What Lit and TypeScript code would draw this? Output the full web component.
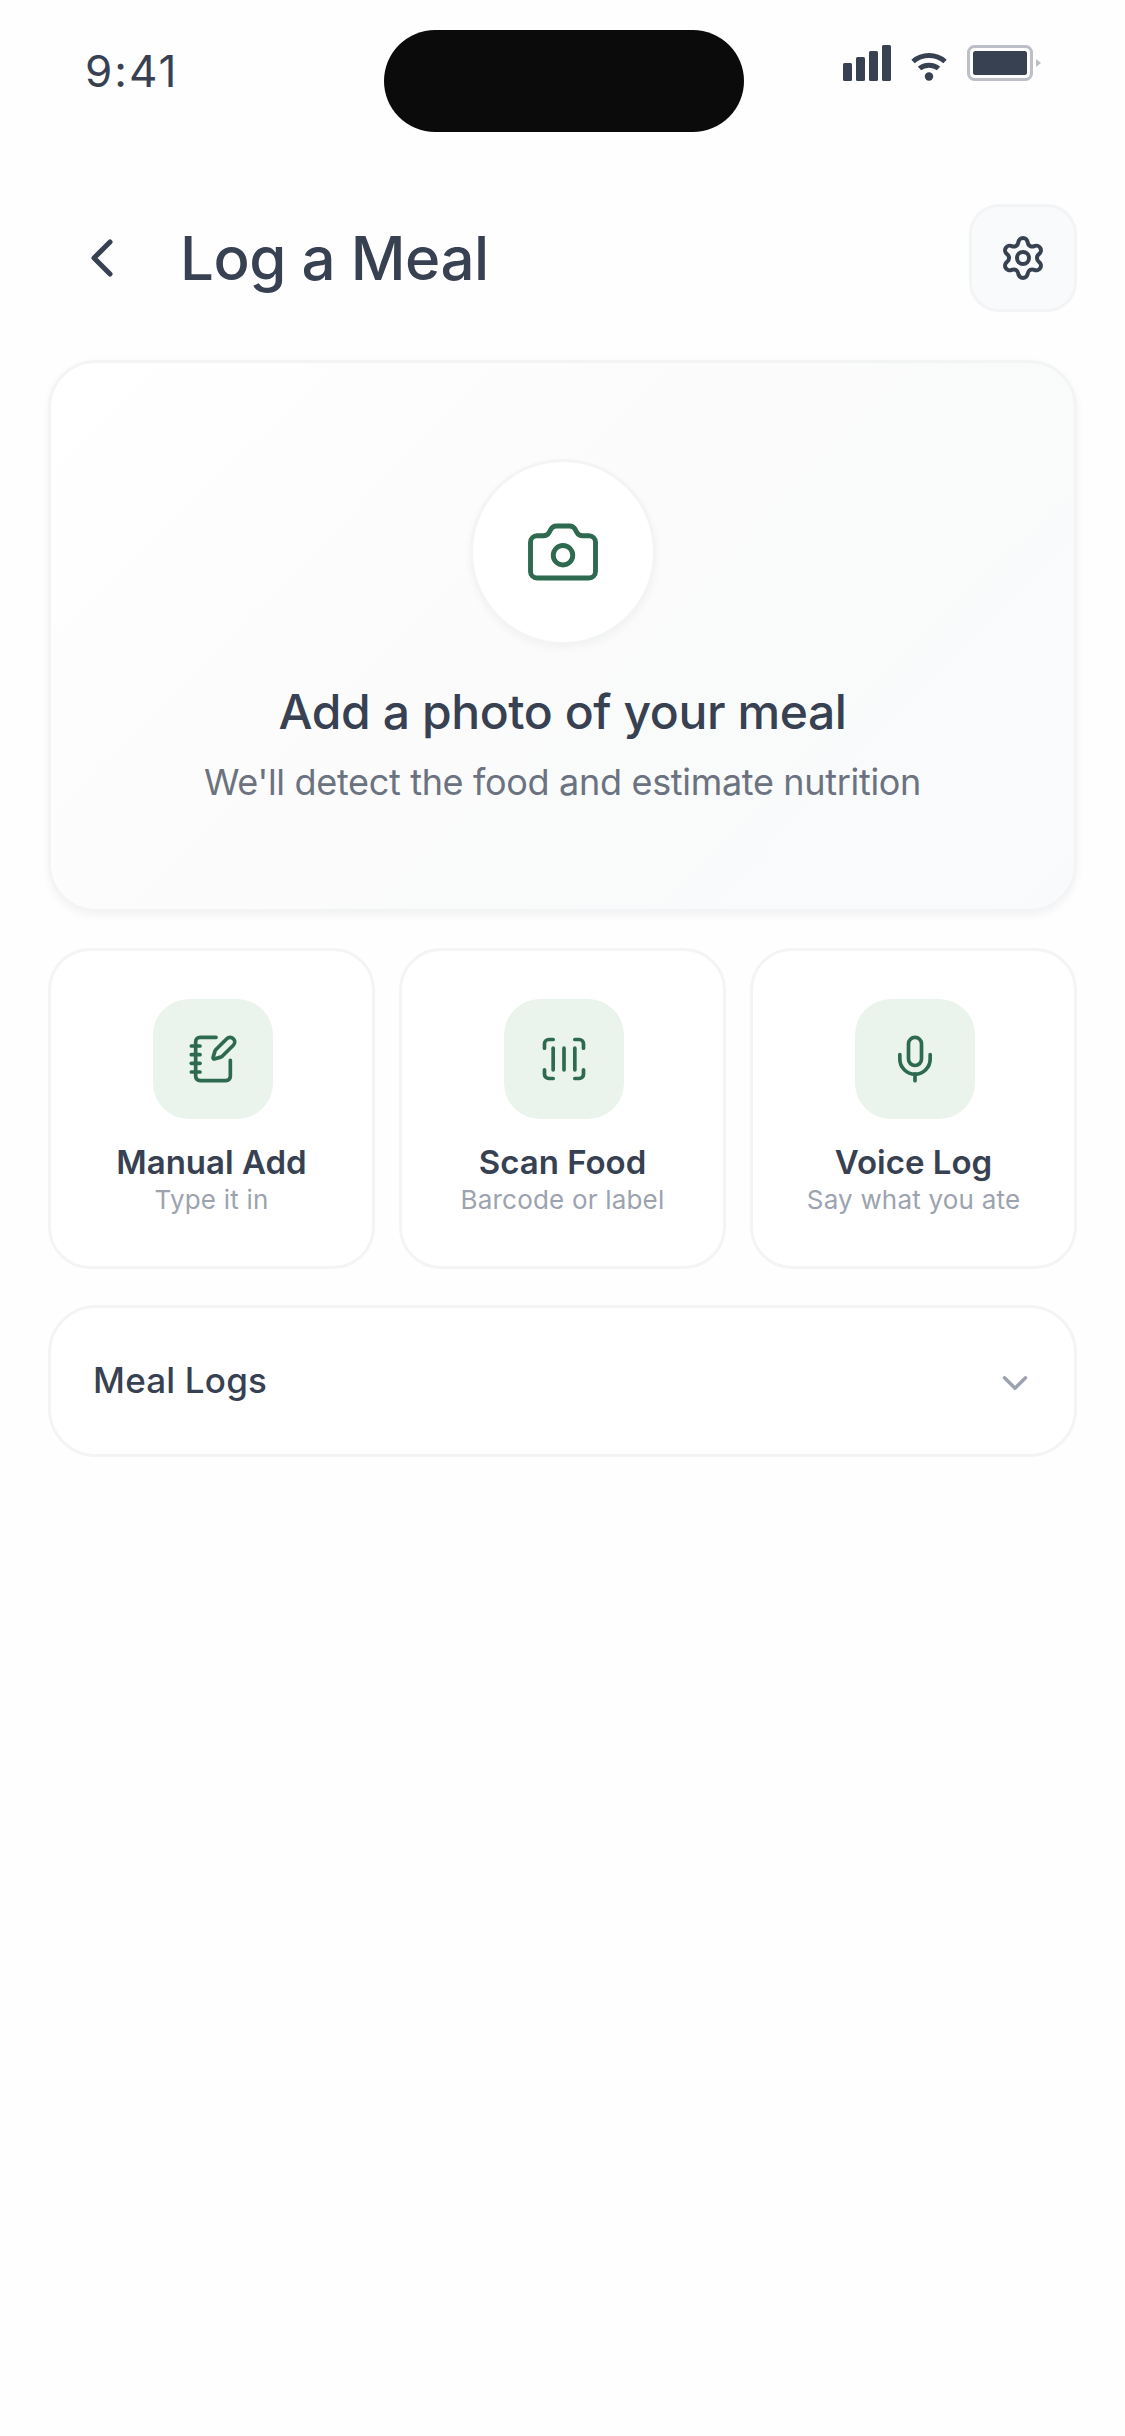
import { LitElement, html, css, svg } from "lit";
import { customElement } from "lit/decorators.js";

const icon = (size: number, stroke: number, body: unknown, cls = "") => html`<svg class=${cls} width=${size} height=${size} viewBox="0 0 24 24" fill="none" stroke="currentColor" stroke-width=${stroke} stroke-linecap="round" stroke-linejoin="round">${body}</svg>`;

const actions = [
  { title: "Manual Add", sub: "Type it in", icon: svg`<path d="M13.4 2H6a2 2 0 0 0-2 2v16a2 2 0 0 0 2 2h12a2 2 0 0 0 2-2v-7.4"/><path d="M2 6h4"/><path d="M2 10h4"/><path d="M2 14h4"/><path d="M2 18h4"/><path d="M21.378 5.626a1 1 0 1 0-3.004-3.004l-5.01 5.012a2 2 0 0 0-.506.854l-.837 2.87a.5.5 0 0 0 .62.62l2.87-.837a2 2 0 0 0 .854-.506z"/>` },
  { title: "Scan Food", sub: "Barcode or label", icon: svg`<path d="M3 7V5a2 2 0 0 1 2-2h2"/><path d="M17 3h2a2 2 0 0 1 2 2v2"/><path d="M21 17v2a2 2 0 0 1-2 2h-2"/><path d="M7 21H5a2 2 0 0 1-2-2v-2"/><path d="M7 7v10"/><path d="M12 7v10"/><path d="M17 7v10"/>` },
  { title: "Voice Log", sub: "Say what you ate", icon: svg`<path d="M12 19v3"/><path d="M19 10v2a7 7 0 0 1-14 0v-2"/><rect x="9" y="2" width="6" height="13" rx="3"/>` },
];

@customElement("app-root")
export class AppRoot extends LitElement {
  static styles = css`
    :host { display: block; width: 1125px; height: 2436px; background: #fefefe; color: #374151; font-family: Inter, "Liberation Sans", sans-serif; overflow: hidden; }
    .status { position: relative; height: 144px; padding: 0 84px 0 85px; display: flex; justify-content: space-between; align-items: flex-start; }
    .time { font-size: 44px; font-weight: 400; line-height: 54px; margin-top: 44px; letter-spacing: 2px; }
    .island { position: absolute; left: 384px; top: 30px; width: 360px; height: 102px; border-radius: 51px; background: #0b0b0b; }
    .status-icons { display: flex; align-items: flex-end; gap: 20px; margin-top: 45px; height: 36px; }
    .page { padding: 60px 48px 0; display: flex; flex-direction: column; }
    .header { display: flex; align-items: center; gap: 24px; height: 108px; margin-bottom: 48px; }
    .back { width: 108px; height: 108px; display: flex; align-items: center; justify-content: center; color: #374151; }
    h1 { flex: 1; margin: 0; font-size: 60px; font-weight: 500; line-height: 72px; letter-spacing: -0.45px; }
    .settings { width: 108px; height: 108px; box-sizing: border-box; border: 3px solid #f3f4f6; border-radius: 30px; background: #f9fafb; display: flex; align-items: center; justify-content: center; color: #374151; }
    .hero { box-sizing: border-box; height: 552px; border: 3px solid #f3f4f6; border-radius: 48px; background: linear-gradient(135deg, #ffffff 0%, #fafbfa 50%, #f8fafc 100%); box-shadow: 0 3px 9px rgba(0,0,0,0.05); display: flex; flex-direction: column; align-items: center; padding-top: 96px; margin-bottom: 36px; }
    .circle { width: 186px; height: 186px; flex: none; margin-left: 1px; box-sizing: border-box; border-radius: 50%; background: #fff; border: 3px solid #f3f4f6; box-shadow: 0 3px 9px rgba(0,0,0,0.04); display: flex; align-items: center; justify-content: center; color: #2d6a4f; }
    .circle svg { margin-top: 0; }
    .hero h2 { margin: 38px 0 0; font-size: 48px; font-weight: 500; line-height: 58px; letter-spacing: -0.4px; }
    .hero p { margin: 19px 0 0; font-size: 36px; font-weight: 400; line-height: 44px; letter-spacing: -0.32px; color: #6b7280; }
    .actions { display: grid; grid-template-columns: repeat(3, 1fr); gap: 24px; margin-bottom: 36px; }
    .action { box-sizing: border-box; height: 321px; border: 3px solid #f3f4f6; border-radius: 42px; background: #fff; display: flex; flex-direction: column; align-items: center; padding-top: 48px; }
    .tile { width: 120px; height: 120px; margin-left: 3px; border-radius: 36px; background: #eaf4ec; display: flex; align-items: center; justify-content: center; color: #2d6a4f; }
    .action-title { margin-top: 23px; font-size: 33px; font-weight: 600; line-height: 40px; }
    .action-sub { margin-top: 2px; font-size: 26px; font-weight: 400; line-height: 32px; letter-spacing: 0.2px; color: #9ca3af; }
    .logs { box-sizing: border-box; height: 152px; border: 3px solid #f3f4f6; border-radius: 48px; background: #fff; display: flex; align-items: center; justify-content: space-between; padding: 0 38px 0 42px; }
    .logs span { font-size: 35px; font-weight: 500; line-height: 42px; letter-spacing: 0.2px; margin-top: -2px; }
    .chev { color: #9ca3af; margin-top: 4px; }
  `;

  render() {
    return html`
      <div class="status">
        <span class="time">9:41</span>
        <div class="island"></div>
        <div class="status-icons">
          <svg width="48" height="36" viewBox="0 0 48 36" fill="#374151"><rect x="0" y="18" width="9" height="18" rx="1.5"/><rect x="13" y="12" width="9" height="24" rx="1.5"/><rect x="26" y="6" width="9" height="30" rx="1.5"/><rect x="39" y="0" width="9" height="36" rx="1.5"/></svg>
          <svg width="36" height="30" viewBox="0 0 36 30" fill="none" stroke="#374151" stroke-width="5"><path d="M2 10.5 C11 2.5 25 2.5 34 10.5"/><path d="M8.5 17.5 C13.5 13 22.5 13 27.5 17.5"/><circle cx="18" cy="25.5" r="4.2" fill="#374151" stroke="none"/></svg>
          <svg width="74" height="36" viewBox="0 0 74 36" fill="none"><rect x="1.5" y="1.5" width="63" height="33" rx="6" stroke="#bcc0c6" stroke-width="3"/><rect x="6" y="6" width="54" height="24" rx="2.5" fill="#374151"/><path d="M69 14 L74 18 L69 22 Z" fill="#bcc0c6"/></svg>
        </div>
      </div>
      <div class="page">
        <div class="header">
          <div class="back">${icon(64, 1.9, svg`<path d="m15 18-6-6 6-6"/>`)}</div>
          <h1>Log a Meal</h1>
          <div class="settings">${icon(48, 2, svg`<path d="M9.671 4.136a2.34 2.34 0 0 1 4.659 0 2.34 2.34 0 0 0 3.319 1.915 2.34 2.34 0 0 1 2.33 4.033 2.34 2.34 0 0 0 0 3.831 2.34 2.34 0 0 1-2.33 4.033 2.34 2.34 0 0 0-3.319 1.915 2.34 2.34 0 0 1-4.659 0 2.34 2.34 0 0 0-3.32-1.915 2.34 2.34 0 0 1-2.33-4.033 2.34 2.34 0 0 0 0-3.831A2.34 2.34 0 0 1 6.35 6.051a2.34 2.34 0 0 0 3.32-1.915"/><circle cx="12" cy="12" r="3"/>`)}</div>
        </div>
        <div class="hero">
          <div class="circle">${icon(78, 1.5, svg`<path d="M13.997 4a2 2 0 0 1 1.76 1.05l.486.9A2 2 0 0 0 18.003 7H20a2 2 0 0 1 2 2v9a2 2 0 0 1-2 2H4a2 2 0 0 1-2-2V9a2 2 0 0 1 2-2h1.997a2 2 0 0 0 1.759-1.048l.489-.904A2 2 0 0 1 10.004 4z"/><circle cx="12" cy="13" r="3"/>`)}</div>
          <h2>Add a photo of your meal</h2>
          <p>We'll detect the food and estimate nutrition</p>
        </div>
        <div class="actions">
          ${actions.map((a) => html`
            <div class="action">
              <div class="tile">${icon(52, 1.7, a.icon)}</div>
              <div class="action-title">${a.title}</div>
              <div class="action-sub">${a.sub}</div>
            </div>`)}
        </div>
        <div class="logs">
          <span>Meal Logs</span>
          ${icon(42, 2, svg`<path d="m6 9 6 6 6-6"/>`, "chev")}
        </div>
      </div>
    `;
  }
}
